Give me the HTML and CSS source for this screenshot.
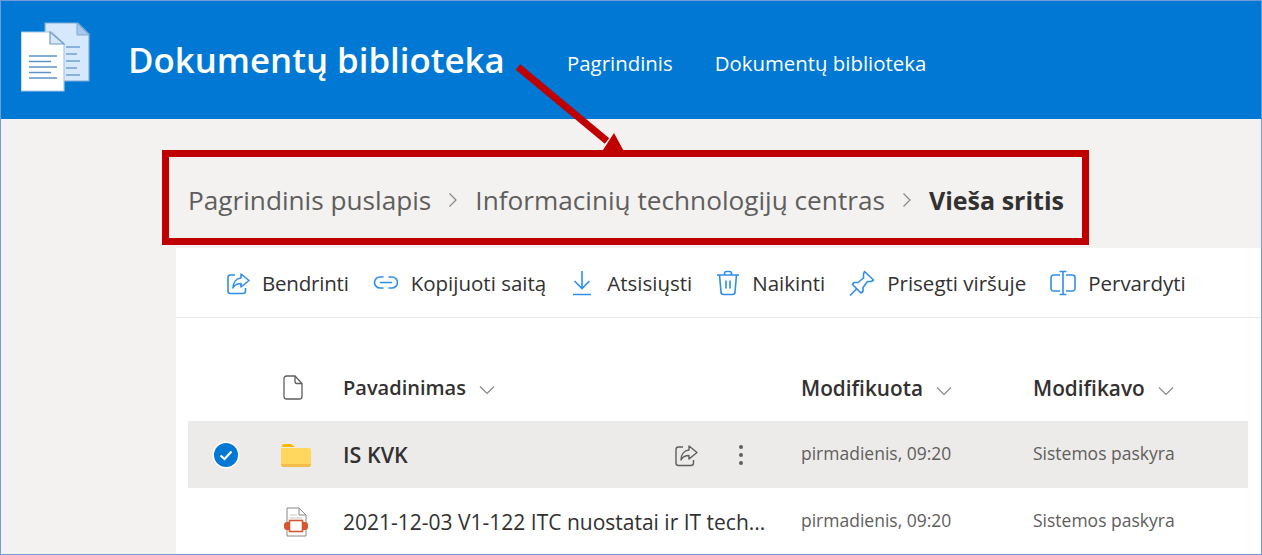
FILE: index.html
```html
<!DOCTYPE html>
<html lang="lt">
<head>
  <meta charset="UTF-8" />
  <title>Dokumentų biblioteka</title>
  <link rel="stylesheet" href="styles.css">
</head>
<body>
  <div class="frame">
    <header class="site-header">
      <svg class="site-logo" width="70" height="72" viewBox="0 0 70 72">
        <path d="M24 1H57L68 12V59H24Z" fill="#d6e8fb" stroke="#7fa9d6" stroke-width="1.2"/>
        <path d="M56 1V13H68Z" fill="#a9c9ea" stroke="#7fa9d6"/>
        <path d="M45 25H59M45 32H56M45 39H59M45 46H56M45 53H59" stroke="#6fa0d2" stroke-width="1.6"/>
        <path d="M0 10H31L43 22V69H0Z" fill="#fff" stroke="#a9c6e6" stroke-width="1.2"/>
        <path d="M29 10V22H43Z" fill="#d6e8fb" stroke="#6f9ccb" stroke-width="1.2"/>
        <path d="M8 34H36M8 39.500H30M8 45H36M8 50.500H30M8 56H36" stroke="#5f93c8" stroke-width="1.7"/>
      </svg>
      <div class="site-title">Dokumentų biblioteka</div>
      <nav class="site-nav">
        <a>Pagrindinis</a>
        <a>Dokumentų biblioteka</a>
      </nav>
    </header>

    <main class="page">
      <div class="breadcrumb">
        <span>Pagrindinis puslapis</span>
        <svg class="crumb-sep" width="10" height="16" viewBox="0 0 10 16"><path d="M1.5 1.5L8 8L1.5 14.5" fill="none" stroke="#8a8886" stroke-width="1.2"/></svg>
        <span>Informacinių technologijų centras</span>
        <svg class="crumb-sep" width="10" height="16" viewBox="0 0 10 16"><path d="M1.5 1.5L8 8L1.5 14.5" fill="none" stroke="#8a8886" stroke-width="1.2"/></svg>
        <strong>Vieša sritis</strong>
      </div>

      <section class="panel">
        <div class="toolbar">
          <div class="tool tool-share">
            <svg width="24" height="24" viewBox="0 0 24 24" fill="none" stroke="#2f8fe6" stroke-width="1.6"><path d="M9 4H4.5A2.5 2.5 0 0 0 2 6.5V20a2.5 2.5 0 0 0 2.500 2.500H17A2.500 2.500 0 0 0 19.500 20V17"/><path d="M15 3L23 9.500L15 16V12.500C11 12.500 8.500 14 7 17C7 11.500 10 7.500 15 7Z" stroke-linejoin="round"/></svg>
            <span>Bendrinti</span>
          </div>
          <div class="tool">
            <svg width="26" height="24" viewBox="0 0 26 24" fill="none" stroke="#2f8fe6" stroke-width="1.6"><path d="M10 6H7a5.500 5.500 0 0 0 0 11H10M16 6H19a5.500 5.500 0 0 1 0 11H16M7.500 11.500H18.500" stroke-linecap="round"/></svg>
            <span>Kopijuoti saitą</span>
          </div>
          <div class="tool tool-wide">
            <svg width="20" height="26" viewBox="0 0 20 26" fill="none" stroke="#2f8fe6" stroke-width="1.6"><path d="M10 1V18M2.500 11L10 18.500L17.500 11M1 24.500H19"/></svg>
            <span>Atsisiųsti</span>
          </div>
          <div class="tool">
            <svg width="24" height="26" viewBox="0 0 24 26" fill="none" stroke="#2f8fe6" stroke-width="1.6"><path d="M1 5H23M8.500 5V3.500A2 2 0 0 1 10.500 1.500H13.500A2 2 0 0 1 15.500 3.500V5M3.500 5L5 22A2.500 2.500 0 0 0 7.500 24.500H16.500A2.500 2.500 0 0 0 19 22L20.500 5M10 10.500V18.500M14 10.500V18.500"/></svg>
            <span>Naikinti</span>
          </div>
          <div class="tool">
            <svg width="26" height="26" viewBox="0 0 26 26" fill="none" stroke="#2f8fe6" stroke-width="1.6"><path d="M15.500 1.500L24.500 10L22.500 11.500L18.500 11.500L14 17.500L14 21.500L12 23L3.500 14.500L5 12.500H9L14.500 8V4Z" stroke-linejoin="round"/><path d="M8 18.500L1 25.500"/></svg>
            <span>Prisegti viršuje</span>
          </div>
          <div class="tool">
            <svg width="26" height="26" viewBox="0 0 26 26" fill="none" stroke="#2f8fe6" stroke-width="1.600"><path d="M10 5H3.500A2.500 2.500 0 0 0 1 7.500V18.500A2.500 2.500 0 0 0 3.500 21H10M16 5H22.500A2.500 2.500 0 0 1 25 7.500V18.500A2.500 2.500 0 0 1 22.500 21H16M13 2V24M9.500 1.500H16.500M9.500 24.500H16.500"/></svg>
            <span>Pervardyti</span>
          </div>
        </div>

        <div class="file-list">
          <div class="file-row file-head">
            <div class="col-check"></div>
            <div class="col-icon">
              <svg class="head-doc" width="20" height="25" viewBox="0 0 20 25" fill="none" stroke="#605e5c" stroke-width="1.300"><path d="M3.500 1H12L19 8.500V21.500A2.500 2.500 0 0 1 16.500 24H3.500A2.500 2.500 0 0 1 1 21.500V3.500A2.500 2.500 0 0 1 3.500 1Z"/><path d="M12 1V6.500A2 2 0 0 0 14 8.500H19"/></svg>
            </div>
            <div class="col-name">Pavadinimas <svg class="caret" width="16" height="10" viewBox="0 0 16 10"><path d="M1 1.500L8 8.500L15 1.500" fill="none" stroke="#8a8886" stroke-width="1.200"/></svg></div>
            <div class="col-date head-wide">Modifikuota <svg class="caret" width="16" height="10" viewBox="0 0 16 10"><path d="M1 1.500L8 8.500L15 1.500" fill="none" stroke="#8a8886" stroke-width="1.200"/></svg></div>
            <div class="col-user head-wide">Modifikavo <svg class="caret" width="16" height="10" viewBox="0 0 16 10"><path d="M1 1.500L8 8.500L15 1.500" fill="none" stroke="#8a8886" stroke-width="1.200"/></svg></div>
          </div>

          <div class="file-row is-selected">
            <div class="col-check">
              <svg width="28" height="28" viewBox="0 0 28 28"><circle cx="14" cy="14" r="13.500" fill="#fff"/><circle cx="14" cy="14" r="12" fill="#0078d4"/><path d="M8.500 14.500L12.500 18L19.500 10.500" fill="none" stroke="#fff" stroke-width="2.200"/></svg>
            </div>
            <div class="col-icon">
              <svg width="30" height="24" viewBox="0 0 30 24"><path d="M1 3A2 2 0 0 1 3 1H10L14 4H1Z" fill="#ffb900"/><path d="M0 5H28A2 2 0 0 1 30 7V21H0Z" fill="#ffd75e"/><path d="M0 21H30V22A2 2 0 0 1 28 24H2A2 2 0 0 1 0 22Z" fill="#f2bd4a"/></svg>
            </div>
            <div class="col-name row-name">
              <span class="name-text">IS KVK</span>
              <div class="row-actions">
                <svg width="24" height="24" viewBox="0 0 24 24" fill="none" stroke="#605e5c" stroke-width="1.400"><path d="M9 4H4.500A2.500 2.500 0 0 0 2 6.500V20a2.500 2.500 0 0 0 2.500 2.500H17A2.500 2.500 0 0 0 19.500 20V17"/><path d="M15 3L23 9.500L15 16V12.500C11 12.500 8.500 14 7 17C7 11.500 10 7.500 15 7Z" stroke-linejoin="round"/></svg>
                <svg width="6" height="22" viewBox="0 0 6 22" fill="#605e5c"><circle cx="3" cy="3" r="2"/><circle cx="3" cy="11" r="2"/><circle cx="3" cy="19" r="2"/></svg>
              </div>
            </div>
            <div class="col-date cell-meta">pirmadienis, 09:20</div>
            <div class="col-user cell-meta">Sistemos paskyra</div>
          </div>

          <div class="file-row">
            <div class="col-check"></div>
            <div class="col-icon">
              <svg width="28" height="30" viewBox="0 0 26 30"><path d="M4 1H16L23 8V29H4Z" fill="#fff" stroke="#8a8886"/><path d="M16 1V8H23" fill="none" stroke="#8a8886"/><path d="M7 8H14M7 11H19" stroke="#c8c6c4"/><rect x="1" y="15" width="24" height="8" rx="3" fill="#d65532"/><rect x="6.500" y="13.500" width="13" height="11" fill="#fff" stroke="#d65532" stroke-width="1.600"/></svg>
            </div>
            <div class="col-name row-name"><span class="name-text">2021-12-03 V1-122 ITC nuostatai ir IT tech...</span></div>
            <div class="col-date cell-meta">pirmadienis, 09:20</div>
            <div class="col-user cell-meta">Sistemos paskyra</div>
          </div>
        </div>
      </section>
    </main>

    <!-- annotation drawn over the page -->
    <div class="mark-box"></div>
    <svg class="mark-arrow" width="120" height="100" viewBox="0 0 120 100">
      <path d="M3 3L92 77" stroke="#c00000" stroke-width="7" fill="none"/>
      <path d="M99 69L86 89L112 93Z" fill="#c00000"/>
    </svg>
  </div>
</body>
</html>
```

FILE: styles.css
```css
* {
  box-sizing: border-box;
}

html, body {
  margin: 0;
  height: 100%;
  overflow: hidden;
}

body {
  font-family: "Open Sans", "Noto Sans", sans-serif;
  color: #323130;
}

.frame {
  position: relative;
  height: 555px;
  border: 1px solid #6f9bd8;
  background-color: #f3f2f1;
  overflow: hidden;
}

.site-header {
  display: flex;
  align-items: center;
  height: 118px;
  padding-left: 20px;
  background-color: #0078d4;
  color: #fff;
}

.site-logo {
  margin-right: 37px;
  margin-top: -4px;
  flex: none;
}

.site-title {
  font-size: 34.8px;
  font-weight: 600;
  margin-top: -2px;
  width: 439px;
  white-space: nowrap;
}

.site-nav {
  display: flex;
  gap: 42px;
  font-size: 20.4px;
  margin-top: 6px;
}

.page {
  padding-left: 175px;
}

.breadcrumb {
  display: flex;
  align-items: center;
  gap: 17px;
  height: 129px;
  padding: 32px 0 0 12px;
  font-size: 26.2px;
  color: #605e5c;
}

.breadcrumb strong {
  color: #323130;
  font-size: 25px;
  font-weight: 700;
}

.panel {
  background-color: #fff;
  height: 310px;
}

.toolbar {
  display: flex;
  align-items: center;
  gap: 24px;
  height: 70px;
  padding: 0 0 0 50px;
  border-bottom: 1px solid #edebe9;
  font-size: 20.5px;
}

.tool {
  display: flex;
  align-items: center;
  gap: 12px;
}

.tool-share {
  letter-spacing: -0.2px;
}

.tool-wide {
  gap: 15px;
  margin-left: 2px;
}

.file-list {
  padding: 36px 13px 0 12px;
}

.file-row {
  display: flex;
  align-items: center;
  height: 67px;
  font-size: 20px;
}

.file-head {
  height: 67px;
  font-weight: 600;
}

.is-selected {
  background-color: #edebe9;
}

.col-check {
  display: flex;
  justify-content: center;
  width: 76px;
  flex: none;
}

.col-icon {
  display: flex;
  justify-content: center;
  width: 60px;
  flex: none;
  margin-left: 2px;
}

.head-doc {
  margin-right: 6px;
}

.col-name {
  width: 475px;
  padding-left: 17px;
  flex: none;
}

.col-date {
  width: 232px;
  flex: none;
}

.col-user {
  flex: 1;
}

.head-wide {
  font-size: 20.8px;
}

.caret {
  margin-left: 8px;
}

.row-name {
  display: flex;
  align-items: center;
  justify-content: space-between;
  padding-right: 57px;
  white-space: nowrap;
}

.name-text {
  font-size: 21px;
}

.is-selected .name-text {
  font-size: 21.5px;
  font-weight: 600;
}

.row-actions {
  display: flex;
  align-items: center;
  gap: 40px;
}

.cell-meta {
  font-size: 17.5px;
  padding-bottom: 4px;
  color: #605e5c;
}

.mark-box {
  position: absolute;
  left: 161px;
  top: 149px;
  width: 927px;
  height: 95px;
  border: 7px solid #c00000;
}

.mark-arrow {
  position: absolute;
  left: 514px;
  top: 63px;
}
```
